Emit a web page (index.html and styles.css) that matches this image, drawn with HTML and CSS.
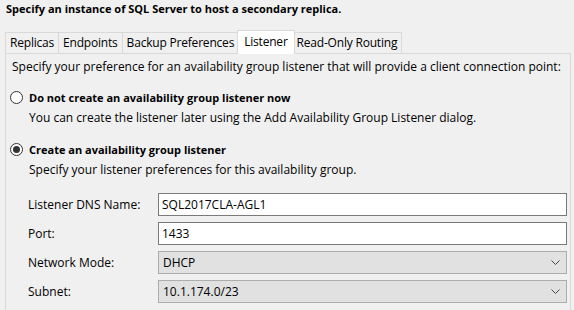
FILE: index.html
```html
<!DOCTYPE html>
<html lang="en">
<head>
  <meta charset="UTF-8">
  <title>Specify Replicas</title>
  <link rel="stylesheet" href="styles.css">
</head>
<body>
  <h1 class="page-title">Specify an instance of SQL Server to host a secondary replica.</h1>

  <!-- Tab strip -->
  <ul class="tabs">
    <li class="tab">Replicas</li>
    <li class="tab">Endpoints</li>
    <li class="tab">Backup Preferences</li>
    <li class="tab active">Listener</li>
    <li class="tab">Read-Only Routing</li>
  </ul>

  <!-- Listener page -->
  <section class="panel">
    <p class="intro">Specify your preference for an availability group listener that will provide a client connection point:</p>

    <label class="option">
      <span class="radio"></span>
      <span class="option-title">Do not create an availability group listener now</span>
    </label>
    <p class="hint">You can create the listener later using the Add Availability Group Listener dialog.</p>

    <label class="option">
      <span class="radio checked"></span>
      <span class="option-title">Create an availability group listener</span>
    </label>
    <p class="hint last">Specify your listener preferences for this availability group.</p>

    <div class="form-grid">
      <span class="field-label">Listener DNS Name:</span>
      <div class="textbox">SQL2017CLA-AGL1</div>

      <span class="field-label">Port:</span>
      <div class="textbox">1433</div>

      <span class="field-label">Network Mode:</span>
      <div class="combo">
        <span>DHCP</span>
        <svg class="chevron" width="9" height="6" viewBox="0 0 9 6"><path d="M0.5 0.5 L4.5 4.5 L8.5 0.5" fill="none" stroke="#444" stroke-width="1"/></svg>
      </div>

      <span class="field-label">Subnet:</span>
      <div class="combo">
        <span>10.1.174.0/23</span>
        <svg class="chevron" width="9" height="6" viewBox="0 0 9 6"><path d="M0.5 0.5 L4.5 4.5 L8.5 0.5" fill="none" stroke="#444" stroke-width="1"/></svg>
      </div>
    </div>
  </section>
</body>
</html>
```

FILE: styles.css
```css
:root {
  --window-bg: #f0f0f0;
  --tab-border: #d9d9d9;
  --text-color: #000000;
  --input-border: #7a7a7a;
  --combo-bg: #e1e1e1;
  --combo-border: #adadad;
}

* {
  margin: 0;
  padding: 0;
  box-sizing: border-box;
}

body {
  font-family: "Open Sans", "Noto Sans", sans-serif;
  font-size: 12px;
  color: var(--text-color);
  background: var(--window-bg);
  width: 574px;
  height: 310px;
  overflow: hidden;
}

.page-title {
  font-size: 11px;
  font-weight: 700;
  line-height: 16px;
  padding: 1px 0 0 6px;
  height: 30px;
}

/* Tabs */
.tabs {
  list-style: none;
  display: flex;
  align-items: flex-end;
  padding-left: 5px;
  height: 23px;
  position: relative;
  z-index: 1;
}

.tab {
  height: 21px;
  line-height: 19px;
  padding: 0 4px;
  letter-spacing: -0.2px;
  border: 1px solid var(--tab-border);
  border-bottom: none;
  margin-left: -1px;
  background: var(--window-bg);
}

.tab:first-child {
  margin-left: 0;
}

.tab.active {
  height: 24px;
  background: #fff;
  margin-bottom: -1px;
  line-height: 21px;
  padding: 0 6px;
  margin-left: -2px;
  margin-right: -2px;
  position: relative;
  z-index: 2;
}

/* Panel */
.panel {
  margin: 0 3px 0 5px;
  border: 1px solid var(--tab-border);
  border-bottom: none;
  height: 257px;
  padding: 5px 6px 0 6px;
}

.intro {
  line-height: 16px;
  margin-bottom: 14px;
}

.option {
  display: flex;
  align-items: center;
  gap: 6px;
  margin-left: -2px;
  height: 17px;
}

.option-title {
  font-size: 11px;
  font-weight: 700;
}

.radio {
  width: 13px;
  height: 13px;
  border: 1px solid #333;
  border-radius: 50%;
  background: #fff;
  display: flex;
  align-items: center;
  justify-content: center;
}

.radio.checked::after {
  content: "";
  width: 7px;
  height: 7px;
  border-radius: 50%;
  background: #333;
}

.hint {
  padding-left: 17px;
  line-height: 16px;
  margin-top: 4px;
  margin-bottom: 15px;
}

.hint.last {
  margin-bottom: 15px;
}

/* Listener fields */
.form-grid {
  display: grid;
  grid-template-columns: 130px 1fr;
  row-gap: 6px;
  align-items: center;
  padding-left: 16px;
  margin-right: -3px;
}

.field-label {
  line-height: 16px;
}

.textbox,
.combo {
  height: 23px;
  line-height: 21px;
  padding-left: 3px;
}

.textbox {
  background: #fff;
  border: 1px solid var(--input-border);
}

.combo {
  background: var(--combo-bg);
  border: 1px solid var(--combo-border);
  display: flex;
  justify-content: space-between;
  align-items: center;
  padding-right: 6px;
  padding-left: 4px;
}
```
